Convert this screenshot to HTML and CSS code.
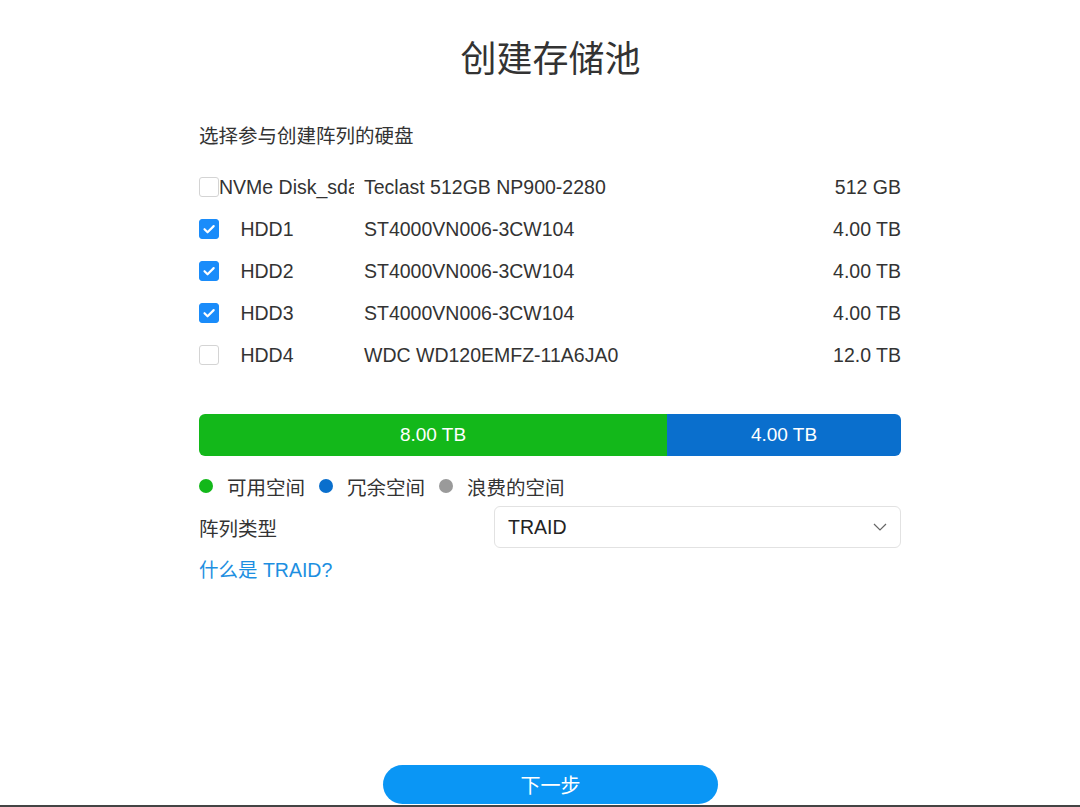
FILE: index.html
```html
<!DOCTYPE html>
<html lang="zh">
<head>
<meta charset="utf-8">
<link rel="stylesheet" href="styles.css">
</head>
<body>
<div class="page">
  <h1 class="title">创建存储池</h1>
  <div class="content">
    <div class="subtitle">选择参与创建阵列的硬盘</div>
    <div class="disks">
      <div class="row">
        <span class="cb"></span>
        <span class="name">NVMe Disk_sda</span>
        <span class="model">Teclast 512GB NP900-2280</span>
        <span class="size">512 GB</span>
      </div>
      <div class="row">
        <span class="cb on"><svg viewBox="0 0 20 20"><path d="M5 10.2l3.4 3.4L15.2 6.8" fill="none" stroke="#fff" stroke-width="2.4" stroke-linecap="round" stroke-linejoin="round"/></svg></span>
        <span class="name">HDD1</span>
        <span class="model">ST4000VN006-3CW104</span>
        <span class="size">4.00 TB</span>
      </div>
      <div class="row">
        <span class="cb on"><svg viewBox="0 0 20 20"><path d="M5 10.2l3.4 3.4L15.2 6.8" fill="none" stroke="#fff" stroke-width="2.4" stroke-linecap="round" stroke-linejoin="round"/></svg></span>
        <span class="name">HDD2</span>
        <span class="model">ST4000VN006-3CW104</span>
        <span class="size">4.00 TB</span>
      </div>
      <div class="row">
        <span class="cb on"><svg viewBox="0 0 20 20"><path d="M5 10.2l3.4 3.4L15.2 6.8" fill="none" stroke="#fff" stroke-width="2.4" stroke-linecap="round" stroke-linejoin="round"/></svg></span>
        <span class="name">HDD3</span>
        <span class="model">ST4000VN006-3CW104</span>
        <span class="size">4.00 TB</span>
      </div>
      <div class="row">
        <span class="cb"></span>
        <span class="name">HDD4</span>
        <span class="model">WDC WD120EMFZ-11A6JA0</span>
        <span class="size">12.0 TB</span>
      </div>
    </div>
    <div class="bar">
      <div class="seg green" style="flex-grow:8">8.00 TB</div>
      <div class="seg blue" style="flex-grow:4">4.00 TB</div>
    </div>
    <div class="legend">
      <span class="dot green"></span><span class="lt">可用空间</span>
      <span class="dot blue"></span><span class="lt">冗余空间</span>
      <span class="dot gray"></span><span class="lt">浪费的空间</span>
    </div>
    <div class="type-row">
      <span class="type-label">阵列类型</span>
      <div class="select">
        <span>TRAID</span>
        <svg class="chev" viewBox="0 0 14 8"><path d="M1 1l6 6 6-6" fill="none" stroke="#666" stroke-width="1.2"/></svg>
      </div>
    </div>
    <a class="link">什么是 TRAID?</a>
  </div>
  <div class="footer">
    <button class="next">下一步</button>
  </div>
</div>
<div class="edge"></div>
</body>
</html>
```
FILE: styles.css
```css
html, body {
  margin: 0;
  padding: 0;
  background: #fff;
}
body {
  font-family: "Liberation Sans", Arial, "Noto Sans CJK SC", sans-serif;
  color: #333;
  height: 807px;
  overflow: hidden;
  display: flex;
  flex-direction: column;
}
.page {
  flex: 1;
  display: flex;
  flex-direction: column;
  align-items: center;
}
.title {
  margin: 31px 0 0;
  font-size: 36px;
  font-weight: normal;
  line-height: 50px;
  color: #333;
  font-family: "Noto Sans CJK SC", sans-serif;
  padding-left: 21px;
}
.content {
  width: 702px;
  margin-top: 41px;
  margin-left: 20px;
  display: flex;
  flex-direction: column;
}
.subtitle {
  font-family: "Noto Sans CJK SC", sans-serif;
  font-size: 19.5px;
  line-height: 26px;
  color: #333;
}
.disks {
  margin-top: 18px;
  display: flex;
  flex-direction: column;
}
.row {
  height: 42px;
  display: flex;
  align-items: center;
  font-size: 19.5px;
}
.cb {
  width: 18px;
  height: 18px;
  border: 1px solid #d4d4d4;
  border-radius: 3px;
  flex: none;
  display: flex;
  background: #fff;
}
.cb.on {
  background: #1a8cfa;
  border-color: #1a8cfa;
}
.cb svg {
  width: 18px;
  height: 18px;
}
.name {
  width: 96px;
  flex: none;
  text-align: center;
  white-space: nowrap;
}
.model {
  flex: none;
  width: 440px;
  margin-left: 39px;
  padding-left: 10px;
  background: #fff;
  white-space: nowrap;
}
.size {
  flex: 1;
  text-align: right;
  white-space: nowrap;
}
.bar {
  margin-top: 38px;
  height: 42px;
  display: flex;
  border-radius: 6px;
  overflow: hidden;
}
.seg {
  flex-basis: 0;
  display: flex;
  align-items: center;
  justify-content: center;
  color: #fff;
  font-size: 19px;
}
.seg.green { background: #13b81a; }
.seg.blue { background: #0a6fcd; }
.legend {
  margin-top: 20px;
  display: flex;
  align-items: center;
  height: 20px;
  font-family: "Noto Sans CJK SC", sans-serif;
  font-size: 19.5px;
  color: #333;
}
.dot {
  width: 14px;
  height: 14px;
  border-radius: 50%;
  margin-right: 14px;
}
.dot.green { background: #13b81a; }
.dot.blue { background: #0a6fcd; }
.dot.gray { background: #9a9a9a; }
.lt { margin-right: 14px; }
.type-row {
  margin-top: 10px;
  display: flex;
  align-items: center;
  height: 42px;
}
.type-label {
  width: 295px;
  font-family: "Noto Sans CJK SC", sans-serif;
  font-size: 19.5px;
  color: #333;
}
.select {
  flex: 1;
  height: 40px;
  border: 1px solid #e2e2e2;
  border-radius: 6px;
  display: flex;
  align-items: center;
  justify-content: space-between;
  padding: 0 13px 0 13px;
  font-size: 19.5px;
  color: #222;
}
.chev {
  width: 14px;
  height: 8px;
}
.link {
  margin-top: 9px;
  font-family: "Liberation Sans", "Noto Sans CJK SC", sans-serif;
  font-size: 19.5px;
  line-height: 26px;
  color: #1d8fe1;
}
.footer {
  margin-top: auto;
  padding-bottom: 1px;
  display: flex;
  justify-content: center;
}
.next {
  width: 335px;
  height: 39px;
  border: none;
  border-radius: 20px;
  background: #0a96f5;
  color: #fff;
  font-family: "Noto Sans CJK SC", sans-serif;
  font-size: 20px;
  margin-left: 21px;
}
.edge {
  height: 2px;
  background: #444;
  flex: none;
}
```
